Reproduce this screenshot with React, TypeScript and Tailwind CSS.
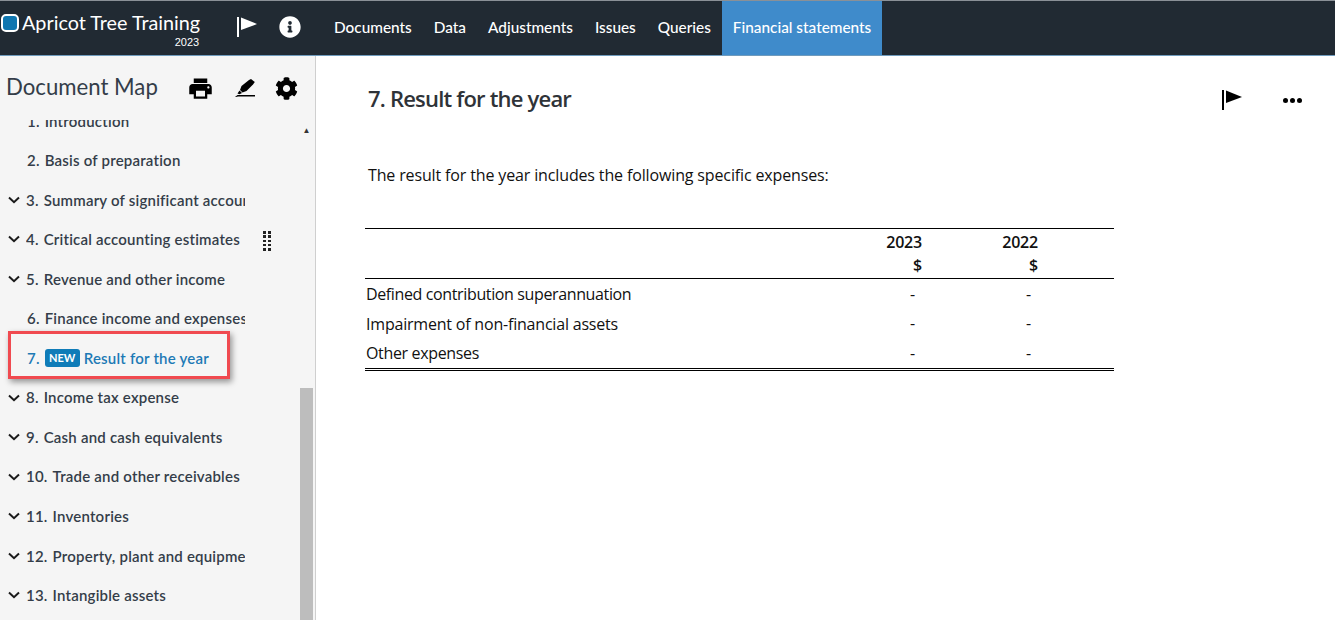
import React from "react";
import { FaCog, FaInfoCircle } from "react-icons/fa";
import { MdPrint } from "react-icons/md";

const Flag = ({ className }: { className?: string }) => (
  <svg viewBox="0 0 20 20" className={className} fill="currentColor">
    <rect x="0" y="0" width="2" height="20" />
    <path d="M4 0.5 L20 7 L4 13 Z" />
  </svg>
);

const Chevron = () => (
  <svg viewBox="0 0 12 8" className="w-[12px] h-[8px] shrink-0" fill="none" stroke="#1a1a1a" strokeWidth="2">
    <path d="M1 1.5 L6 6.2 L11 1.5" />
  </svg>
);

const Pen = () => (
  <svg viewBox="0 0 20 18" className="w-[20px] h-[18px]" fill="#000">
    <path d="M16 0 L19.8 3 L18 5.5 L11.5 12 L7.5 13.5 L5 11 L6.5 7 L14 1 Z" />
    <path d="M4.5 11.5 L7 14 L4.5 15.2 L2.5 14.5 Z" />
    <path d="M0 18 L2.5 16 L20 16 L20 17.5 L3 17.5 L1 18 Z" />
  </svg>
);

const rows: { n: string; t: string; c: boolean }[] = [
  { n: "1.", t: "Introduction", c: false },
  { n: "2.", t: "Basis of preparation", c: false },
  { n: "3.", t: "Summary of significant accounting policies", c: true },
  { n: "4.", t: "Critical accounting estimates", c: true },
  { n: "5.", t: "Revenue and other income", c: true },
  { n: "6.", t: "Finance income and expenses", c: false },
  { n: "7.", t: "Result for the year", c: false },
  { n: "8.", t: "Income tax expense", c: true },
  { n: "9.", t: "Cash and cash equivalents", c: true },
  { n: "10.", t: "Trade and other receivables", c: true },
  { n: "11.", t: "Inventories", c: true },
  { n: "12.", t: "Property, plant and equipment", c: true },
  { n: "13.", t: "Intangible assets", c: true },
];

const Row = ({ n, t, c }: { n: string; t: string; c: boolean }) => {
  const active = n === "7.";
  return (
    <div className={`h-[39.55px] flex items-center text-[15px] font-semibold tracking-[0.21px] ${active ? "text-[#1d7ab5]" : "text-[#343d49]"}`}>
      <div className="w-[26px] pl-[8px] flex items-center">{c ? <Chevron /> : null}</div>
      <div className={`flex items-center overflow-hidden whitespace-nowrap ${c ? "w-[219px]" : "pl-[1px] w-[219px]"}`}>
        <span className="mr-[5px]">{n}</span>
        {active && (
          <span className="mr-[4px] w-[35px] h-[18px] rounded-[3px] bg-[#0f7cb8] text-white text-[11px] font-bold tracking-normal flex items-center justify-center">NEW</span>
        )}
        <span>{t}</span>
      </div>
    </div>
  );
};

const Line = ({ label, className }: { label: string; className?: string }) => (
  <>
    <div className={`h-[29.5px] flex items-center pl-[1px] ${className ?? ""}`}>{label}</div>
    <div className="h-[29.5px] flex items-center justify-end pr-[8px]">-</div>
    <div className="h-[29.5px] flex items-center justify-end pr-[8px]">-</div>
    <div />
  </>
);

export default function App() {
  return (
    <div className="w-[1335px] h-[620px] overflow-hidden flex flex-col bg-white font-['Lato',sans-serif]">
      <header className="h-[56px] shrink-0 bg-[#212a33] border-t border-t-[#8a9097] border-b border-b-[#6f9bbd] flex items-stretch text-white">
        <div className="w-[323px] flex items-center shrink-0">
          <div className="relative ml-[1px] -top-[5px] flex items-center">
            <div className="w-[18px] h-[18px] rounded-[5px] border-2 border-white bg-[#0f76b0]" />
            <div className="ml-[3px] text-[19.8px] leading-none">Apricot Tree Training</div>
            <div className="absolute right-[1px] top-[24px] text-[11px] leading-none font-['Liberation_Sans',sans-serif]">2023</div>
          </div>
          <Flag className="w-[20px] h-[20px] text-white ml-[37px] relative -top-px" />
          <FaInfoCircle className="ml-[22px] text-white text-[22px] relative -top-px" />
        </div>
        <nav className="flex items-stretch text-[15.35px] font-medium">
          {["Documents", "Data", "Adjustments", "Issues", "Queries"].map((x) => (
            <div key={x} className="flex items-center px-[11px]">{x}</div>
          ))}
          <div className="flex items-center px-[11px] bg-[#3f8bcb]">Financial statements</div>
        </nav>
      </header>
      <div className="flex-1 flex min-h-0">
        <aside className="w-[316px] shrink-0 bg-[#f5f5f5] border-r border-r-[#cfcfcf] flex flex-col relative">
          <div className="h-[64px] shrink-0 flex items-center pl-[6px] relative z-10 bg-[#f5f5f5]">
            <div className="text-[22.2px] text-[#343d49] w-[181px] relative -top-[1px]">Document Map</div>
            <MdPrint className="text-black text-[27px]" />
            <div className="ml-[21px]"><Pen /></div>
            <FaCog className="ml-[20px] text-black text-[23px]" />
          </div>
          <div className="flex-1 flex min-h-0 overflow-hidden">
            <div className="flex-1 min-w-0 -mt-[19px]">
              {rows.map((r) => (
                <Row key={r.n} {...r} />
              ))}
            </div>
            <div className="w-[13px] shrink-0 mr-[2px] flex flex-col">
              <div className="text-[#333] text-center text-[8px] leading-[8px] mt-[6px]">▲</div>
              <div className="mt-[254px] flex-1 bg-[#bdbdbd]" />
            </div>
          </div>
          <div className="absolute left-[263px] top-[175px] w-[8px] h-[20px] grid grid-cols-2 gap-x-[2px] gap-y-[1.5px]">
            {Array.from({ length: 10 }).map((_, i) => (
              <div key={i} className="w-[2.5px] h-[2.5px] bg-[#222]" />
            ))}
          </div>
          <div className="absolute left-[8px] top-[275px] w-[222px] h-[48px] border-[3px] border-[#f04a50] shadow-[2px_3px_6px_rgba(0,0,0,0.4)]" />
        </aside>
        <main className="flex-1 min-w-0 pl-[49px] font-['Open_Sans',sans-serif] text-[#111]">
          <div className="flex items-center justify-between h-[88px] pl-[3px] pr-[33px]">
            <h1 className="text-[22px] font-semibold text-[#2f3338] relative -top-[2px] tracking-[-0.8px]">7. Result for the year</h1>
            <div className="flex items-center gap-[41px]">
              <Flag className="w-[20px] h-[20px] text-black" />
              <div className="flex gap-[2px]">
                <div className="w-[5px] h-[5px] rounded-full bg-black" />
                <div className="w-[5px] h-[5px] rounded-full bg-black" />
                <div className="w-[5px] h-[5px] rounded-full bg-black" />
              </div>
            </div>
          </div>
          <p className="pl-[3px] mt-[19px] text-[16px] leading-[24px] tracking-[-0.14px]">The result for the year includes the following specific expenses:</p>
          <div className="mt-[41px] w-[749px] text-[16px] tracking-[-0.2px] grid grid-cols-[1fr_116px_116px_75px] border-t border-t-black border-b-[3px] border-b-[#000] [border-bottom-style:double]">
            <div className="col-span-4 grid grid-cols-subgrid border-b border-b-black h-[50px] font-semibold">
              <div />
              <div className="text-right leading-[23px] pt-[2px] pr-[1px]">2023<br />$</div>
              <div className="text-right leading-[23px] pt-[2px] pr-[1px]">2022<br />$</div>
              <div />
            </div>
            <Line label="Defined contribution superannuation" className="tracking-[-0.37px]" />
            <Line label="Impairment of non-financial assets" className="pt-[1px]" />
            <Line label="Other expenses" className="tracking-[-0.35px]" />
          </div>
        </main>
      </div>
    </div>
  );
}
